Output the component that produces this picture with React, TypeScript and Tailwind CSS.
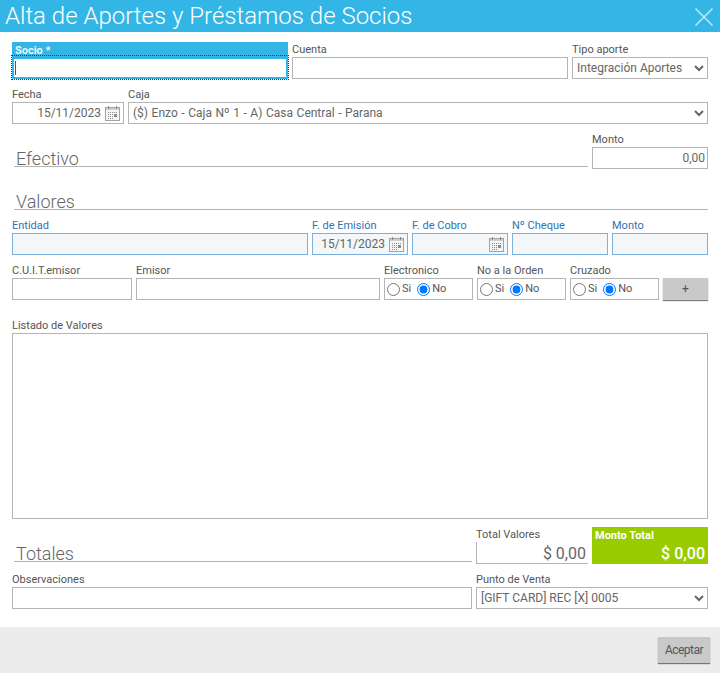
import type { ReactNode } from 'react';

const font = "font-['Roboto','Liberation_Sans',sans-serif]";
const boxGray = 'border border-[#b5b5b5] bg-white';
const boxBlue = 'border border-[#7eb0dc] bg-[#f3f7fa]';

function CalendarIcon() {
  return (
    <svg width="15" height="15" viewBox="0 0 15 15" className="shrink-0">
      <rect x="0.5" y="1.5" width="14" height="13" fill="#f6f6f6" stroke="#a3a3a3" />
      <rect x="1" y="2" width="13" height="2" fill="#cfcfcf" />
      <path d="M3.5 0v3M11.5 0v3" stroke="#8a8a8a" />
      <path
        d="M3 6h1v1H3zM5 6h1v1H5zM7 6h1v1H7zM9 6h1v1H9zM11 6h1v1h-1zM3 8h1v1H3zM5 8h1v1H5zM7 8h1v1H7zM9 8h3v3H9zM3 10h1v1H3zM5 10h1v1H5zM7 10h1v1H7zM3 12h1v1H3zM5 12h1v1H5zM7 12h1v1H7z"
        fill="#8a8a8a"
      />
    </svg>
  );
}

function Field({
  label,
  width,
  blue,
  children,
}: {
  label: string;
  width: string;
  blue?: boolean;
  children: ReactNode;
}) {
  return (
    <div className={`${width} shrink-0`}>
      <div className={`h-[14px] text-[11px] leading-[14px] ${blue ? 'text-[#2f72b5]' : 'text-[#555]'}`}>{label}</div>
      {children}
    </div>
  );
}

function TextBox({ blue, value }: { blue?: boolean; value?: string }) {
  return (
    <div className={`h-[22px] w-full px-[2px] text-right text-[12px] leading-[20px] text-[#666] ${blue ? boxBlue : boxGray}`}>
      {value}
    </div>
  );
}

function DateBox({ blue, value }: { blue?: boolean; value?: string }) {
  return (
    <div className={`flex h-[22px] w-full items-center justify-end gap-[4px] pr-[3px] text-[12px] text-[#666] ${blue ? boxBlue : boxGray}`}>
      <span>{value}</span>
      <CalendarIcon />
    </div>
  );
}

function SelectBox({ children, className = '' }: { children: ReactNode; className?: string }) {
  return (
    <select className={`block h-[22px] w-full text-[12px] text-[#666] outline-none ${boxGray} ${className}`}>
      <option>{children}</option>
    </select>
  );
}

function YesNo({ name }: { name: string }) {
  return (
    <div className={`flex h-[22px] w-full items-center pl-[2px] text-[11px] text-[#555] ${boxGray}`}>
      <input type="radio" name={name} className="h-[13px] w-[13px]" />
      <span className="mr-[6px] ml-[2px]">Si</span>
      <input type="radio" name={name} defaultChecked className="h-[13px] w-[13px]" />
      <span className="ml-[2px]">No</span>
    </div>
  );
}

function SectionTitle({ title, className }: { title: string; className: string }) {
  return (
    <div className={`${className} border-b border-[#b5b5b5] pl-[2px] text-[18px] leading-[24px] font-light text-[#666]`}>
      {title}
    </div>
  );
}

export default function App() {
  return (
    <div className={`flex h-[673px] w-[720px] flex-col overflow-hidden bg-white ${font}`}>
      <header className="flex h-[32px] shrink-0 items-center justify-between bg-[#33b5e5] pr-[7px] pl-[5px]">
        <h1 className="text-[24px] leading-[32px] font-light text-white">Alta de Aportes y Préstamos de Socios</h1>
        <svg width="18" height="18" viewBox="0 0 18 18" className="mt-px">
          <path d="M0.5 0.5l17 17M17.5 0.5l-17 17" stroke="#c6ecf9" strokeWidth="1.4" fill="none" />
        </svg>
      </header>

      <main className="flex-1 px-3 pt-[10px]">
        <div className="flex gap-1">
          <div className="w-[276px] shrink-0 bg-[#33b5e5]">
            <div className="h-[14px] pt-[3px] pl-[3px] text-[11px] leading-[12px] font-bold text-[#e8f7fd]">Socio *</div>
            <div className="flex h-[23px] items-center border-x-2 border-t-[3px] border-b-2 border-[#33b5e5] bg-white pl-px outline-1 outline-[#14406b] outline-dotted">
              <div className="h-[14px] w-px bg-[#555]" />
            </div>
          </div>
          <div className="w-[276px] shrink-0 pt-px">
            <Field label="Cuenta" width="w-full">
              <TextBox />
            </Field>
          </div>
          <div className="w-[136px] shrink-0 pt-px">
            <Field label="Tipo aporte" width="w-full">
              <SelectBox>Integración Aportes</SelectBox>
            </Field>
          </div>
        </div>

        <div className="mt-[9px] flex gap-1">
          <Field label="Fecha" width="w-[112px]">
            <DateBox value="15/11/2023" />
          </Field>
          <Field label="Caja" width="w-[580px]">
            <SelectBox className="[word-spacing:0.6px]">($) Enzo - Caja Nº 1 - A) Casa Central - Parana</SelectBox>
          </Field>
        </div>

        <div className="mt-[9px] flex items-start gap-1">
          <SectionTitle title="Efectivo" className="mt-[14px] ml-[2px] h-[20px] w-[574px] shrink-0" />
          <Field label="Monto" width="w-[116px]">
            <TextBox value="0,00" />
          </Field>
        </div>

        <SectionTitle title="Valores" className="mt-[21px] ml-[2px] h-[20px]" />

        <div className="mt-[9px] flex gap-1">
          <Field label="Entidad" width="w-[296px]" blue>
            <TextBox blue />
          </Field>
          <Field label="F. de Emisión" width="w-[96px]" blue>
            <DateBox blue value="15/11/2023" />
          </Field>
          <Field label="F. de Cobro" width="w-[96px]" blue>
            <DateBox blue />
          </Field>
          <Field label="Nº Cheque" width="w-[96px]" blue>
            <TextBox blue />
          </Field>
          <Field label="Monto" width="w-[96px]" blue>
            <TextBox blue />
          </Field>
        </div>

        <div className="mt-[9px] flex gap-1">
          <Field label="C.U.I.T.emisor" width="w-[120px]">
            <TextBox />
          </Field>
          <Field label="Emisor" width="w-[244px]">
            <TextBox />
          </Field>
          <Field label="Electronico" width="w-[89px]">
            <YesNo name="electronico" />
          </Field>
          <Field label="No a la Orden" width="w-[89px]">
            <YesNo name="orden" />
          </Field>
          <Field label="Cruzado" width="w-[89px]">
            <YesNo name="cruzado" />
          </Field>
          <button className="mt-[14px] h-[22px] w-[45px] shrink-0 bg-[#c9c9c9] text-[12px] text-[#555] shadow-[0_1px_1px_rgba(0,0,0,0.5)]">
            +
          </button>
        </div>

        <div className="mt-[19px]">
          <Field label="Listado de Valores" width="w-full">
            <div className={`h-[186px] w-full ${boxGray}`} />
          </Field>
        </div>

        <div className="mt-[8px] flex items-start gap-1">
          <SectionTitle title="Totales" className="mt-[15px] ml-[2px] h-[20px] w-[458px] shrink-0" />
          <div className="w-[112px] shrink-0 pt-px">
            <div className="h-[14px] text-[11px] leading-[14px] text-[#555]">Total Valores</div>
            <div className="h-[22px] border-b border-l border-[#b5b5b5] pr-[2px] text-right text-[16px] leading-[24px] text-[#666]">
              $ 0,00
            </div>
          </div>
          <div className="h-[37px] w-[116px] shrink-0 bg-[#99cc00] px-[3px] text-white">
            <div className="h-[15px] pt-[3px] text-[11px] leading-[12px] font-bold">Monto Total</div>
            <div className="text-right text-[16px] leading-[24px] font-medium">$ 0,00</div>
          </div>
        </div>

        <div className="mt-[9px] flex gap-1">
          <Field label="Observaciones" width="w-[460px]">
            <TextBox />
          </Field>
          <Field label="Punto de Venta" width="w-[232px]">
            <SelectBox>[GIFT CARD] REC [X] 0005</SelectBox>
          </Field>
        </div>
      </main>

      <footer className="flex h-[46px] shrink-0 items-start justify-end bg-[#ececec] pt-[10px] pr-[10px]">
        <button className="h-[26px] w-[52px] bg-[#c9c9c9] text-[12px] tracking-[-0.5px] text-[#555] shadow-[0_1px_1px_rgba(0,0,0,0.5)]">
          Aceptar
        </button>
      </footer>
    </div>
  );
}
